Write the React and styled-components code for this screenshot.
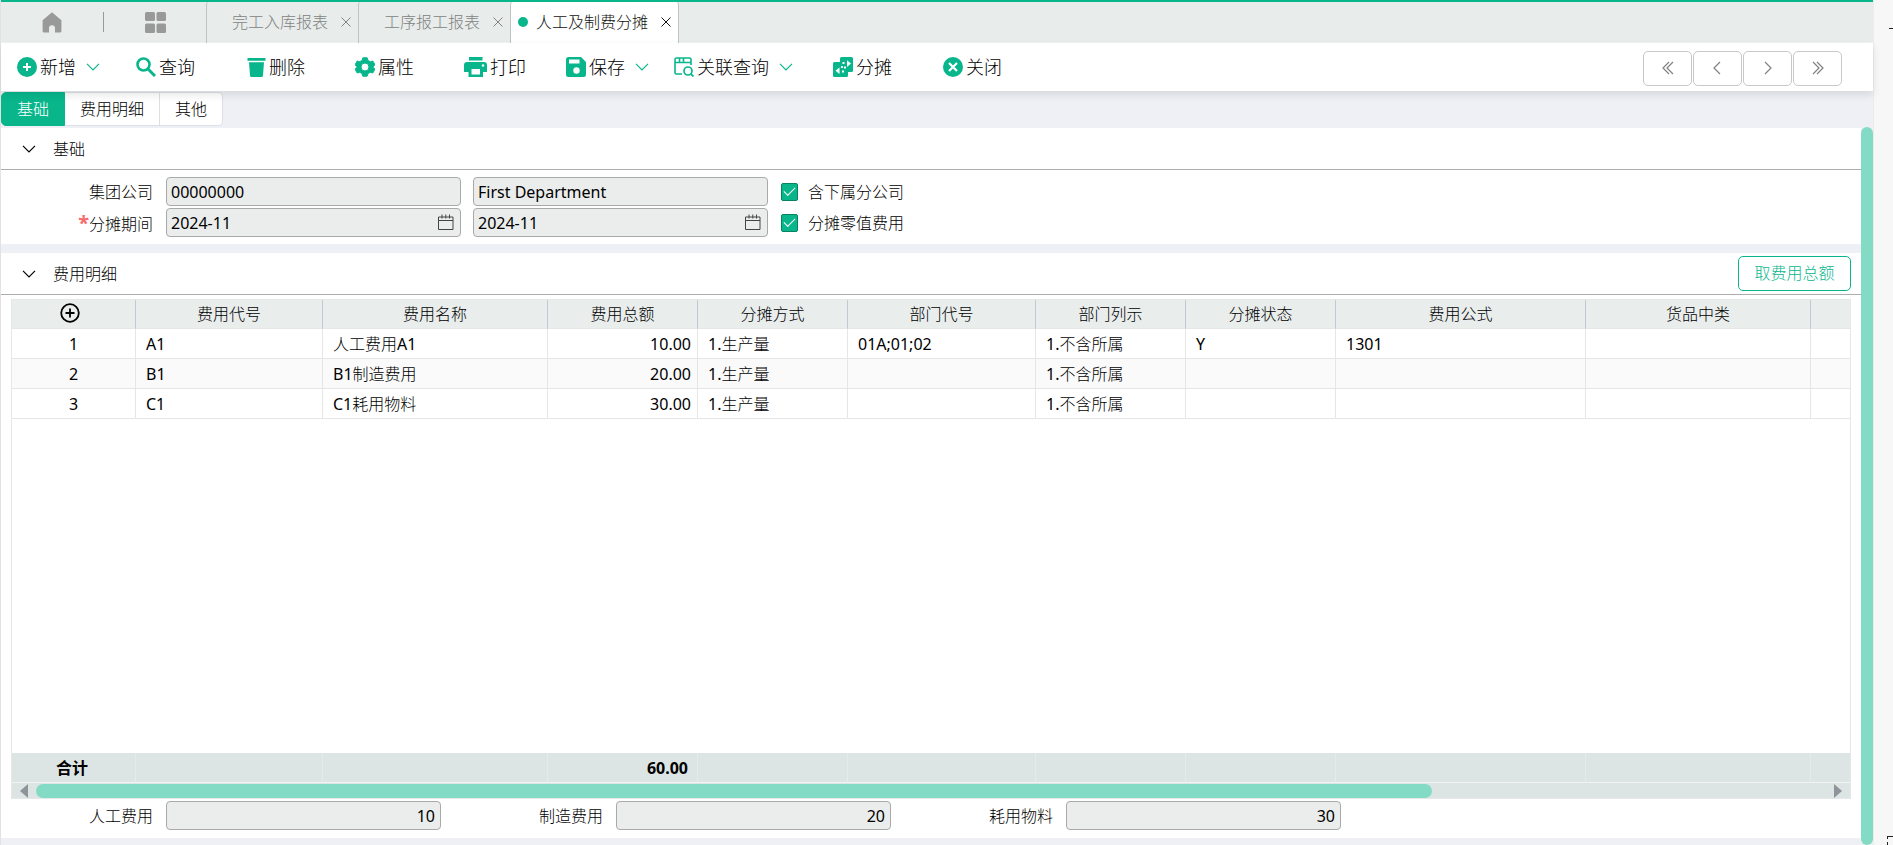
import { useState } from "react";
import styled, { createGlobalStyle } from "styled-components";

const green = "#09b68c";
const mint = "#84dbc5";

const GlobalStyle = createGlobalStyle`
  * { box-sizing: border-box; }
  body {
    margin: 0;
    background: #f7f7f7;
    color: #000;
    font-family: "Noto Sans", "Noto Sans CJK SC Light", "Noto Sans CJK SC", sans-serif;
    font-size: 16px;
    line-height: 24px;
  }
  button, input {
    font: inherit;
    color: inherit;
  }
  button {
    border: 0;
    padding: 0;
    background: none;
    cursor: pointer;
  }
  svg { display: block; flex: none; }
`;

const Page = styled.div`
  display: flex;
  height: 100vh;
  min-height: 600px;
  overflow: hidden;
`;

const Main = styled.div`
  flex: 1;
  min-width: 0;
  display: flex;
  flex-direction: column;
  background: #eff0f5;
  border-left: 1px solid #e2e2e2;
`;

const Gutter = styled.aside`
  width: 20px;
  border-left: 1px solid #ececec;
  display: flex;
  flex-direction: column;
  justify-content: space-between;
  align-items: flex-end;
  padding-top: 28px;
`;

const Dash = styled.span`
  width: 4px;
  height: 1px;
  background: #222;
`;

const DashedCorner = styled.span`
  width: 6px;
  height: 9px;
  border-top: 1px dashed #222;
  border-left: 1px dashed #222;
`;

/* ---------- top window tabs ---------- */

const TopBar = styled.header`
  display: flex;
  height: 43px;
  flex: none;
  background: #e8eceb;
  border-top: 2px solid ${green};
  border-bottom: 1px solid #f1f3f2;
`;

const HomeArea = styled.div`
  width: 205px;
  display: flex;
  align-items: center;
  justify-content: space-between;
  padding: 0 40px 0 41px;
  color: #999;
`;

const Divider = styled.span`
  width: 1px;
  height: 20px;
  background: #999;
`;

const WindowTab = styled.div`
  display: flex;
  align-items: center;
  height: 41px;
  padding: 0 7px 1px ${(p) => (p.$active ? 7 : 25)}px;
  border-left: 1px solid #bfc3c6;
  border-radius: 3px 3px 0 0;
  color: ${(p) => (p.$active ? "#111" : "#808382")};
  background: ${(p) => (p.$active ? "#fff" : "transparent")};
  ${(p) => p.$active && "border-right: 1px solid #bfc3c6;"}
`;

const TabTitle = styled.button`
  display: flex;
  align-items: center;
  gap: 8px;
  margin-right: 13px;
`;

const Dot = styled.span`
  width: 10px;
  height: 10px;
  border-radius: 50%;
  background: ${green};
`;

/* ---------- toolbar ---------- */

const Toolbar = styled.nav`
  display: flex;
  align-items: center;
  flex: none;
  height: 48px;
  padding: 0 31px 0 16px;
  background: #fff;
  position: relative;
  z-index: 1;
  box-shadow: 0 4px 8px rgba(0, 0, 0, 0.1);
`;

const Tool = styled.button`
  display: flex;
  align-items: center;
  gap: 3px;
  margin-right: ${(p) => p.$after}px;
  font-size: 18px;
  white-space: nowrap;
  svg { color: ${green}; }
`;

const ToolArrow = styled.span`
  margin-left: 7px;
`;

const Pager = styled.div`
  display: flex;
  gap: 1px;
  margin-left: auto;
  padding-top: 2px;
`;

const PageButton = styled.button`
  width: 49px;
  height: 35px;
  display: grid;
  place-items: center;
  border: 1px solid #c8c8c8;
  border-radius: 5px;
  background: #fff;
  color: #808080;
`;

/* ---------- anchors under the toolbar ---------- */

const Anchors = styled.div`
  display: flex;
  flex: none;
  height: 36px;
  padding-top: 1px;
`;

const Anchor = styled.button`
  height: 34px;
  padding: 0 15px;
  border: 1px solid ${(p) => (p.$active ? green : "#dcdfe6")};
  border-left-width: ${(p) => (p.$active ? "1px" : "0")};
  background: ${(p) => (p.$active ? green : "#fff")};
  color: ${(p) => (p.$active ? "#fff" : "#000")};
  &:first-child { border-radius: 5px 0 0 5px; }
  &:last-child { border-radius: 0 5px 5px 0; }
`;

/* ---------- content ---------- */

const Content = styled.div`
  display: flex;
  flex: 1;
  min-height: 0;
`;

const Sections = styled.main`
  flex: 1;
  min-width: 0;
  display: flex;
  flex-direction: column;
  gap: 9px;
  padding: 1px 0 7px;
`;

const VerticalTrack = styled.div`
  width: 12px;
  background: #eff0f5;
`;

const VerticalThumb = styled.div`
  height: 100%;
  border-radius: 6px;
  background: ${mint};
`;

const Section = styled.section`
  background: #fff;
  ${(p) => p.$grow && "flex: 1; min-height: 0; display: flex; flex-direction: column;"}
`;

const SectionHeader = styled.div`
  display: flex;
  align-items: center;
  justify-content: space-between;
  height: 42px;
  flex: none;
  padding: 0 10px 0 21px;
  border-bottom: 1px solid #acacac;
`;

const SectionTitle = styled.button`
  display: flex;
  align-items: center;
  gap: 17px;
`;

const OutlineButton = styled.button`
  width: 113px;
  height: 35px;
  padding-bottom: 1px;
  border: 1px solid ${green};
  border-radius: 5px;
  background: #fff;
  color: ${green};
`;

const Form = styled.div`
  display: grid;
  grid-template-columns: 165px 295px 295px auto;
  grid-auto-rows: 29px;
  row-gap: 2px;
  align-items: center;
  padding: 7px 0;
`;

const Label = styled.label`
  width: 165px;
  padding: 1px 13px 0 0;
  text-align: right;
`;

const Required = styled.span`
  color: #f56c6c;
  font-size: 20px;
  font-weight: bold;
`;

const Field = styled.div`
  display: flex;
  align-items: center;
  height: 29px;
  width: ${(p) => p.$width || 295}px;
  margin-left: ${(p) => (p.$second ? 12 : 0)}px;
  padding-right: 5px;
  border: 1px solid #a9a9a9;
  border-radius: 4px;
  background: #ebedec;
`;

const TextInput = styled.input`
  flex: 1;
  min-width: 0;
  height: 27px;
  padding: 0 0 0 4px;
  border: 0;
  outline: 0;
  background: transparent;
  text-align: ${(p) => (p.$right ? "right" : "left")};
`;

const CheckLabel = styled.label`
  display: flex;
  align-items: center;
  gap: 10px;
  padding-left: 25px;
`;

const Check = styled.input`
  appearance: none;
  width: 17px;
  height: 18px;
  margin: 0;
  border: 1px solid #078263;
  border-radius: 2px;
  background: #fff;
  display: grid;
  place-items: center;
  &:checked {
    background: ${green};
  }
  &:checked::after {
    content: "";
    width: 10px;
    height: 5px;
    border-left: 1px solid #fff;
    border-bottom: 1px solid #fff;
    transform: rotate(-45deg);
    margin-bottom: 3px;
  }
`;

/* ---------- grid ---------- */

const GridBox = styled.div`
  flex: 1;
  min-height: 0;
  display: flex;
  flex-direction: column;
  margin: 4px 10px 0;
  border: 1px solid #e6e8e7;
`;

const GridBody = styled.div`
  flex: 1;
  min-height: 0;
  overflow: hidden;
`;

const Table = styled.table`
  width: 100%;
  table-layout: fixed;
  border-collapse: separate;
  border-spacing: 0;
`;

const Th = styled.th`
  height: 29px;
  padding: 0;
  font-weight: normal;
  background: #e9edec;
  border-right: 1px solid #c4c8d6;
  border-bottom: 1px solid #e6e6e6;
  &:first-child { padding-right: 8px; }
  &:last-child { border-right: 0; }
`;

const Row = styled.tr`
  background: #fff;
  &:nth-child(even) { background: #fafafa; }
`;

const Td = styled.td`
  height: 30px;
  padding: 0 ${(p) => (p.$align === "right" ? 6 : 10)}px 0 10px;
  border-right: 1px solid #e6e6e6;
  border-bottom: 1px solid #e6e6e6;
  text-align: ${(p) => p.$align || "left"};
  white-space: nowrap;
  &:last-child { border-right: 0; }
`;

const TotalCell = styled.td`
  height: 30px;
  padding: ${(p) => (p.$first ? "1px 3px 0 0" : "1px 9px 0 0")};
  font-weight: bold;
  font-family: "Noto Sans", "Noto Sans CJK SC", sans-serif;
  text-align: ${(p) => (p.$first ? "center" : "right")};
  background: #dce5e3;
  border-right: 1px solid #e6eae9;
  border-bottom: 1px solid #f1f4f3;
  &:last-child { border-right: 0; }
`;

const HorizontalTrack = styled.div`
  display: flex;
  align-items: center;
  justify-content: space-between;
  height: 15px;
  flex: none;
  padding: 0 8px;
  background: #dce5e3;
`;

const ThumbLane = styled.div`
  flex: 1;
  margin: 0 8px;
`;

const HorizontalThumb = styled.div`
  width: 78%;
  height: 14px;
  border-radius: 7px;
  background: ${mint};
`;

const Arrow = styled.button`
  border: 7px solid transparent;
  border-${(p) => (p.$dir === "left" ? "right" : "left")}: 8px solid #909399;
  border-${(p) => p.$dir}-width: 0;
`;

const Summary = styled.div`
  display: flex;
  flex: none;
  padding: 2px 0 8px;
`;

const SummaryItem = styled.div`
  display: flex;
  align-items: center;
  width: 450px;
`;

/* ---------- icons ---------- */

const Svg = ({ w = 20, h = 20, box = `0 0 ${w} ${h}`, children }) => (
  <svg width={w} height={h} viewBox={box} fill="currentColor" aria-hidden="true">
    {children}
  </svg>
);

const line = { fill: "none", stroke: "currentColor" };

const HomeIcon = () => (
  <Svg w={20} h={21}>
    <path d="M10 .3 19.4 8.300V19a1.500 1.500 0 0 1-1.500 1.500H13v-4.200a3 3 0 0 0-6 0v4.200H2.100A1.500 1.500 0 0 1 .6 19V8.300Z" />
  </Svg>
);

const AppsIcon = () => (
  <Svg w={21} h={21}>
    <rect width="10" height="9" rx="1.5" />
    <rect x="11.5" width="9.5" height="9" rx="1.5" />
    <rect y="11.5" width="10" height="9.5" rx="1.5" />
    <rect x="11.5" y="11.5" width="9.5" height="9.5" rx="1.5" />
  </Svg>
);

const CrossIcon = () => (
  <Svg w={10} h={10}>
    <path d="M.5.5l9 9M9.5.5l-9 9" {...line} />
  </Svg>
);

const AddIcon = () => (
  <Svg>
    <circle cx="10" cy="10" r="10" />
    <path d="M10 6v8M6 10h8" {...line} stroke="#fff" strokeWidth="2" />
  </Svg>
);

const SearchIcon = () => (
  <Svg>
    <circle cx="7.5" cy="7.5" r="6" {...line} strokeWidth="2.6" />
    <path d="M12 12l7 7" {...line} strokeWidth="3" />
  </Svg>
);

const TrashIcon = () => (
  <Svg w={19} h={20}>
    <path d="M.5 1h18v2.800H.5zM2 5.200h15l-1 13.200A1.600 1.600 0 0 1 14.400 20H4.600A1.600 1.600 0 0 1 3 18.400Z" />
  </Svg>
);

const GearIcon = () => (
  <Svg box="2 2 20 20">
    <path
      fillRule="evenodd"
      strokeLinejoin="round"
      stroke="currentColor"
      d="M9.800 2.800h4.400l.7 2.600 2.300 1.300 2.600-.7 2.200 3.800-1.900 1.900v.6l1.900 1.900-2.200 3.800-2.600-.7-2.300 1.300-.7 2.600H9.800l-.7-2.600-2.300-1.300-2.600.7L2 14.200l1.900-1.900v-.6L2 9.800 4.200 6l2.600.7 2.300-1.300ZM12 16a4 4 0 1 0 0-8 4 4 0 0 0 0 8Z"
    />
  </Svg>
);

const PrintIcon = () => (
  <Svg w={23} h={20}>
    <path d="M5 0h13.500v3.500H5zM3 5h17a3 3 0 0 1 3 3v7h-4v5H4.500v-5H0V8a3 3 0 0 1 3-3Z" />
    <path d="M7.500 12h8.500v5.500H7.500z" fill="#fff" />
    <circle cx="19" cy="8.500" r="1.200" fill="#fff" />
  </Svg>
);

const SaveIcon = () => (
  <Svg>
    <path d="M2.500 0H15l5 5v12.500a2.500 2.500 0 0 1-2.500 2.500h-15A2.500 2.500 0 0 1 0 17.500v-15A2.500 2.500 0 0 1 2.500 0Z" />
    <path d="M3 2.500h10.500v4H3z" fill="#fff" />
    <circle cx="10.500" cy="13.500" r="3.200" fill="#fff" />
  </Svg>
);

const LinkSearchIcon = () => (
  <Svg>
    <path d="M17 8V2.500A1.500 1.500 0 0 0 15.500 1h-13A1.500 1.500 0 0 0 1 2.500v13A1.500 1.500 0 0 0 2.500 17H8M1 5.500h16M5.500 1v4M9.500 1v4" {...line} strokeWidth="1.600" />
    <circle cx="14" cy="14" r="4" {...line} strokeWidth="1.700" />
    <path d="M16.800 16.800 19.500 19.500" {...line} strokeWidth="1.800" />
  </Svg>
);

const ShareIcon = () => (
  <Svg>
    <path d="M8.500 0h10A1.500 1.500 0 0 1 20 1.500v12a1.500 1.500 0 0 1-1.500 1.500H15v3.500a1.500 1.500 0 0 1-1.500 1.500h-12A1.500 1.500 0 0 1 0 18.500v-12A1.500 1.500 0 0 1 1.500 5H7V1.500A1.500 1.500 0 0 1 8.500 0Z" />
    <path d="M14 3.200 18 6.500 14 10ZM6.500 10.500v6.500L2.500 13.800ZM9.500 5h2v2h-2zM8 9h2v2H8zM11 9.500h2v2h-2zM9 13.500h2v2H9z" fill="#fff" />
  </Svg>
);

const CloseIcon = () => (
  <Svg>
    <circle cx="10" cy="10" r="10" />
    <path d="M6 6l8 8M14 6l-8 8" {...line} stroke="#fff" strokeWidth="2.200" />
  </Svg>
);

const Chevron = () => (
  <Svg w={14} h={8}>
    <path d="M1 .8l6 6 6-6" {...line} strokeWidth="1.200" />
  </Svg>
);

const CalendarIcon = () => (
  <Svg w={18} h={17}>
    <path d="M1.500 3h14.500v12.500H1.500zM1.500 6.500H16M5 .5v4M8.800 .5v4M12.500 .5v4" {...line} stroke="#444" />
  </Svg>
);

const PlusCircle = () => (
  <Svg>
    <circle cx="10" cy="10" r="8.800" {...line} strokeWidth="1.800" />
    <path d="M10 5.500v9M5.500 10h9" {...line} strokeWidth="1.800" />
  </Svg>
);

const pagerPaths = {
  首页: "M9 1 3 7l6 6M13 1 7 7l6 6",
  上一页: "M10 1 4 7l6 6",
  下一页: "M5 1l6 6-6 6",
  末页: "M3 1l6 6-6 6M7 1l6 6-6 6",
};

/* ---------- data ---------- */

const tools = [
  { text: "新增", Icon: AddIcon, arrow: true, after: 36 },
  { text: "查询", Icon: SearchIcon, after: 52 },
  { text: "删除", Icon: TrashIcon, after: 50 },
  { text: "属性", Icon: GearIcon, after: 50 },
  { text: "打印", Icon: PrintIcon, after: 40 },
  { text: "保存", Icon: SaveIcon, arrow: true, after: 25 },
  { text: "关联查询", Icon: LinkSearchIcon, arrow: true, after: 40 },
  { text: "分摊", Icon: ShareIcon, after: 51 },
  { text: "关闭", Icon: CloseIcon, after: 0 },
];

const columns = [
  { title: "费用代号", width: 187 },
  { title: "费用名称", width: 225 },
  { title: "费用总额", width: 150, align: "right" },
  { title: "分摊方式", width: 150 },
  { title: "部门代号", width: 188 },
  { title: "部门列示", width: 150 },
  { title: "分摊状态", width: 150 },
  { title: "费用公式", width: 250 },
  { title: "货品中类", width: 225 },
];

const rows = [
  ["A1", "人工费用A1", "10.00", "1.生产量", "01A;01;02", "1.不含所属", "Y", "1301", ""],
  ["B1", "B1制造费用", "20.00", "1.生产量", "", "1.不含所属", "", "", ""],
  ["C1", "C1耗用物料", "30.00", "1.生产量", "", "1.不含所属", "", "", ""],
];

const totals = ["", "", "60.00", "", "", "", "", "", ""];

const Col = styled.col`
  width: ${(p) => p.$width}px;
`;

const IconButton = styled.button`
  display: block;
  margin: 0 auto;
  padding-bottom: 3px;
`;

const Cols = () => (
  <colgroup>
    <Col $width={124} />
    {columns.map((c) => (
      <Col key={c.title} $width={c.width} />
    ))}
    <col />
  </colgroup>
);

const FeeTable = () => (
  <GridBox>
    <GridBody>
      <Table>
        <Cols />
        <thead>
          <tr>
            <Th>
              <IconButton aria-label="添加行"><PlusCircle /></IconButton>
            </Th>
            {columns.map((c) => (
              <Th key={c.title}>{c.title}</Th>
            ))}
            <Th />
          </tr>
        </thead>
        <tbody>
          {rows.map((row, i) => (
            <Row key={row[0]}>
              <Td $align="center">{i + 1}</Td>
              {row.map((cell, j) => (
                <Td key={columns[j].title} $align={columns[j].align}>{cell}</Td>
              ))}
              <Td />
            </Row>
          ))}
        </tbody>
      </Table>
    </GridBody>
    <Table>
      <Cols />
      <tbody>
        <tr>
          <TotalCell $first>合计</TotalCell>
          {totals.map((t, i) => (
            <TotalCell key={columns[i].title}>{t}</TotalCell>
          ))}
          <TotalCell />
        </tr>
      </tbody>
    </Table>
    <HorizontalTrack>
      <Arrow $dir="left" aria-label="向左滚动" />
      <ThumbLane>
        <HorizontalThumb />
      </ThumbLane>
      <Arrow $dir="right" aria-label="向右滚动" />
    </HorizontalTrack>
  </GridBox>
);

const SummaryField = ({ id, label, value }) => (
  <SummaryItem>
    <Label htmlFor={id}>{label}</Label>
    <Field $width={275}>
      <TextInput id={id} defaultValue={value} $right />
    </Field>
  </SummaryItem>
);

export default function App() {
  const [anchor, setAnchor] = useState("基础");

  return (
    <>
      <GlobalStyle />
      <Page>
        <Main>
          <TopBar>
            <HomeArea>
              <button aria-label="首页"><HomeIcon /></button>
              <Divider />
              <button aria-label="应用"><AppsIcon /></button>
            </HomeArea>
            {["完工入库报表", "工序报工报表"].map((t) => (
              <WindowTab key={t}>
                <TabTitle>{t}</TabTitle>
                <button aria-label="关闭标签"><CrossIcon /></button>
              </WindowTab>
            ))}
            <WindowTab $active>
              <TabTitle><Dot />人工及制费分摊</TabTitle>
              <button aria-label="关闭标签"><CrossIcon /></button>
            </WindowTab>
          </TopBar>

          <Toolbar>
            {tools.map(({ text, Icon, arrow, after }) => (
              <Tool key={text} $after={after}>
                <Icon />
                {text}
                {arrow && <ToolArrow><Chevron /></ToolArrow>}
              </Tool>
            ))}
            <Pager>
              {Object.entries(pagerPaths).map(([name, d]) => (
                <PageButton key={name} aria-label={name}>
                  <Svg w={16} h={14}><path d={d} {...line} strokeWidth="1.200" /></Svg>
                </PageButton>
              ))}
            </Pager>
          </Toolbar>

          <Anchors>
            {["基础", "费用明细", "其他"].map((a) => (
              <Anchor key={a} $active={a === anchor} onClick={() => setAnchor(a)}>
                {a}
              </Anchor>
            ))}
          </Anchors>

          <Content>
            <Sections>
              <Section>
                <SectionHeader>
                  <SectionTitle><Chevron />基础</SectionTitle>
                </SectionHeader>
                <Form>
                  <Label htmlFor="company">集团公司</Label>
                  <Field><TextInput id="company" defaultValue="00000000" /></Field>
                  <Field $second>
                    <TextInput aria-label="公司名称" defaultValue="First Department" />
                  </Field>
                  <CheckLabel>
                    <Check type="checkbox" defaultChecked />
                    含下属分公司
                  </CheckLabel>
                  <Label htmlFor="from"><Required>*</Required>分摊期间</Label>
                  <Field>
                    <TextInput id="from" defaultValue="2024-11" />
                    <CalendarIcon />
                  </Field>
                  <Field $second>
                    <TextInput aria-label="截止期间" defaultValue="2024-11" />
                    <CalendarIcon />
                  </Field>
                  <CheckLabel>
                    <Check type="checkbox" defaultChecked />
                    分摊零值费用
                  </CheckLabel>
                </Form>
              </Section>

              <Section $grow>
                <SectionHeader>
                  <SectionTitle><Chevron />费用明细</SectionTitle>
                  <OutlineButton>取费用总额</OutlineButton>
                </SectionHeader>
                <FeeTable />
                <Summary>
                  <SummaryField id="labor" label="人工费用" value="10" />
                  <SummaryField id="making" label="制造费用" value="20" />
                  <SummaryField id="material" label="耗用物料" value="30" />
                </Summary>
              </Section>
            </Sections>
            <VerticalTrack>
              <VerticalThumb />
            </VerticalTrack>
          </Content>
        </Main>
        <Gutter>
          <Dash />
          <DashedCorner />
        </Gutter>
      </Page>
    </>
  );
}
